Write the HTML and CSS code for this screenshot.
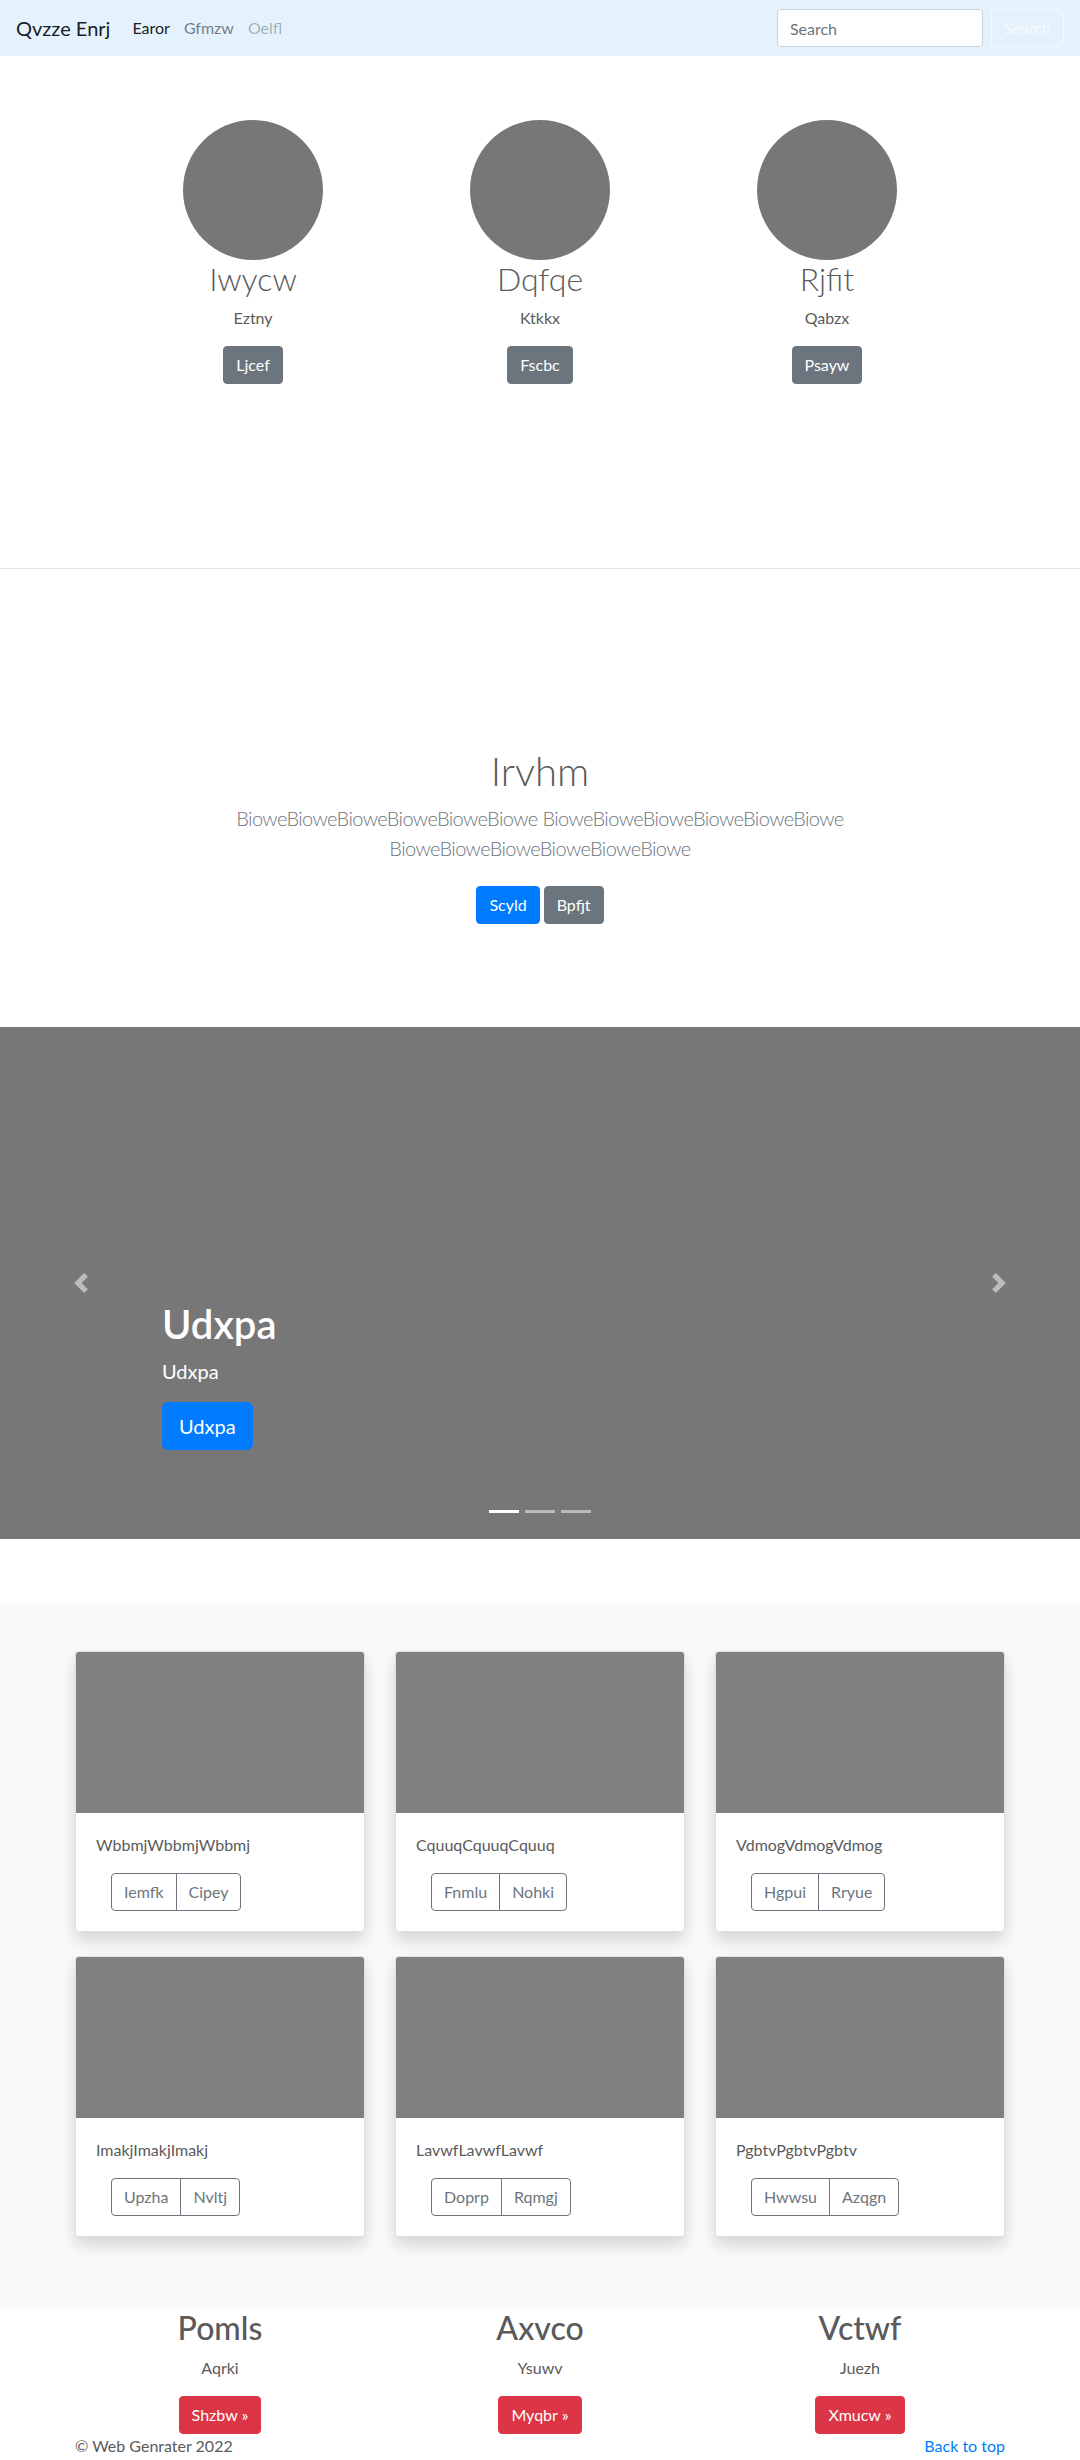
FILE: index.html
```html
<!DOCTYPE html>
<html lang="en">
<head>
<meta charset="utf-8">
<title>Qvzze Enrj</title>
<link rel="stylesheet" href="styles.css">
</head>
<body>
<nav class="navbar">
  <a class="brand" href="#">Qvzze Enrj</a>
  <ul class="nav-links">
    <li><a class="nav-link active" href="#">Earor</a></li>
    <li><a class="nav-link" href="#">Gfmzw</a></li>
    <li><a class="nav-link disabled" href="#">Oelfl</a></li>
  </ul>
  <form class="search">
    <input class="search-input" type="text" placeholder="Search">
    <button class="search-btn" type="button">Search</button>
  </form>
</nav>

<section class="team">
  <div class="team-grid">
    <div class="member">
      <div class="avatar"></div>
      <h2>Iwycw</h2>
      <p>Eztny</p>
      <a class="btn btn-secondary" href="#">Ljcef</a>
    </div>
    <div class="member">
      <div class="avatar"></div>
      <h2>Dqfqe</h2>
      <p>Ktkkx</p>
      <a class="btn btn-secondary" href="#">Fscbc</a>
    </div>
    <div class="member">
      <div class="avatar"></div>
      <h2>Rjfit</h2>
      <p>Qabzx</p>
      <a class="btn btn-secondary" href="#">Psayw</a>
    </div>
  </div>
</section>

<hr class="divider">

<section class="hero">
  <h1>Irvhm</h1>
  <p class="lead">BioweBioweBioweBioweBioweBiowe BioweBioweBioweBioweBioweBiowe BioweBioweBioweBioweBioweBiowe</p>
  <div class="actions">
    <a class="btn btn-primary" href="#">Scyld</a>
    <a class="btn btn-secondary" href="#">Bpfjt</a>
  </div>
</section>

<section class="carousel">
  <ol class="indicators">
    <li class="active"></li>
    <li></li>
    <li></li>
  </ol>
  <div class="caption">
    <h1>Udxpa</h1>
    <p class="caption-sub">Udxpa</p>
    <p class="caption-btn"><a class="btn btn-lg btn-primary" href="#">Udxpa</a></p>
  </div>
  <a class="ctrl prev" href="#" aria-label="Previous">
    <svg width="20" height="20" viewBox="0 0 8 8" fill="#fff"><path d="M5.25 0l-4 4 4 4 1.5-1.5-2.5-2.5 2.5-2.5-1.5-1.5z"/></svg>
  </a>
  <a class="ctrl next" href="#" aria-label="Next">
    <svg width="20" height="20" viewBox="0 0 8 8" fill="#fff"><path d="M2.75 0l-1.5 1.5 2.5 2.5-2.5 2.5 1.5 1.5 4-4-4-4z"/></svg>
  </a>
</section>

<section class="album">
  <div class="album-grid">
    <div class="card">
      <div class="card-img"></div>
      <div class="card-body">
        <p class="card-text">WbbmjWbbmjWbbmj</p>
        <div class="btn-group"><a class="btn btn-outline" href="#">Iemfk</a><a class="btn btn-outline" href="#">Cipey</a></div>
      </div>
    </div>
    <div class="card">
      <div class="card-img"></div>
      <div class="card-body">
        <p class="card-text">CquuqCquuqCquuq</p>
        <div class="btn-group"><a class="btn btn-outline" href="#">Fnmlu</a><a class="btn btn-outline" href="#">Nohki</a></div>
      </div>
    </div>
    <div class="card">
      <div class="card-img"></div>
      <div class="card-body">
        <p class="card-text">VdmogVdmogVdmog</p>
        <div class="btn-group"><a class="btn btn-outline" href="#">Hgpui</a><a class="btn btn-outline" href="#">Rryue</a></div>
      </div>
    </div>
    <div class="card">
      <div class="card-img"></div>
      <div class="card-body">
        <p class="card-text">ImakjImakjImakj</p>
        <div class="btn-group"><a class="btn btn-outline" href="#">Upzha</a><a class="btn btn-outline" href="#">Nvltj</a></div>
      </div>
    </div>
    <div class="card">
      <div class="card-img"></div>
      <div class="card-body">
        <p class="card-text">LavwfLavwfLavwf</p>
        <div class="btn-group"><a class="btn btn-outline" href="#">Doprp</a><a class="btn btn-outline" href="#">Rqmgj</a></div>
      </div>
    </div>
    <div class="card">
      <div class="card-img"></div>
      <div class="card-body">
        <p class="card-text">PgbtvPgbtvPgbtv</p>
        <div class="btn-group"><a class="btn btn-outline" href="#">Hwwsu</a><a class="btn btn-outline" href="#">Azqgn</a></div>
      </div>
    </div>
  </div>
</section>

<section class="marketing">
  <div class="feature">
    <h2>Pomls</h2>
    <p>Aqrki</p>
    <a class="btn btn-danger" href="#">Shzbw &raquo;</a>
  </div>
  <div class="feature">
    <h2>Axvco</h2>
    <p>Ysuwv</p>
    <a class="btn btn-danger" href="#">Myqbr &raquo;</a>
  </div>
  <div class="feature">
    <h2>Vctwf</h2>
    <p>Juezh</p>
    <a class="btn btn-danger" href="#">Xmucw &raquo;</a>
  </div>
</section>

<footer class="footer">
  <p>&copy; Web Genrater 2022</p>
  <p><a class="top-link" href="#">Back to top</a></p>
</footer>
</body>
</html>
```

FILE: styles.css
```css
* {
  box-sizing: border-box;
}

html,
body {
  margin: 0;
  padding: 0;
}

html {
  scrollbar-width: none;
}

html::-webkit-scrollbar {
  display: none;
}

body {
  font-family: Lato, "Open Sans", "Noto Sans", sans-serif;
  font-size: 16px;
  line-height: 1.5;
  color: #5a5a5a;
  background: #fff;
}

/* ---------- navbar ---------- */
.navbar {
  display: flex;
  align-items: center;
  height: 56px;
  padding: 0 16px;
  background: #e3f2fd;
}

.brand {
  font-size: 20px;
  line-height: 30px;
  color: rgba(0, 0, 0, 0.9);
  text-decoration: none;
  margin-right: 15px;
}

.nav-links {
  display: flex;
  list-style: none;
  margin: 0;
  padding: 0;
}

.nav-link {
  display: block;
  padding: 8px 7px;
  color: rgba(0, 0, 0, 0.5);
  text-decoration: none;
}

.nav-link.active {
  color: rgba(0, 0, 0, 0.9);
}

.nav-link.disabled {
  color: rgba(0, 0, 0, 0.3);
}

.search {
  margin: 0 0 0 auto;
  display: flex;
  gap: 8px;
}

.search-input {
  width: 206px;
  height: 38px;
  padding: 6px 12px;
  font-family: inherit;
  font-size: 16px;
  line-height: 24px;
  color: #495057;
  background: #fff;
  border: 1px solid #ced4da;
  border-radius: 4px;
}

.search-input::placeholder {
  color: #6c757d;
}

.search-btn {
  height: 38px;
  padding: 6px 12px;
  font-family: inherit;
  font-size: 16px;
  line-height: 24px;
  color: #f8f9fa;
  background: transparent;
  border: 1px solid #f8f9fa;
  border-radius: 4px;
}

/* ---------- buttons ---------- */
.btn {
  display: inline-block;
  padding: 6px 12px;
  font-size: 16px;
  line-height: 24px;
  border: 1px solid transparent;
  border-radius: 4px;
  color: #fff;
  text-decoration: none;
  white-space: nowrap;
}

.btn-secondary {
  background: #6c757d;
  border-color: #6c757d;
}

.btn-primary {
  background: #007bff;
  border-color: #007bff;
}

.btn-danger {
  background: #dc3545;
  border-color: #dc3545;
}

.btn-lg {
  padding: 8px 16px;
  font-size: 20px;
  line-height: 30px;
  border-radius: 6px;
}

.btn-outline {
  color: #6c757d;
  border-color: #6c757d;
  background: transparent;
}

/* ---------- team ---------- */
.team {
  padding: 64px 0 184px;
}

.team-grid {
  width: 861px;
  margin: 0 auto;
  display: grid;
  grid-template-columns: repeat(3, 1fr);
  text-align: center;
}

.avatar {
  width: 140px;
  height: 140px;
  margin: 0 auto;
  border-radius: 50%;
  background: #777;
}

.team h2 {
  margin: 0 0 8px;
  font-size: 32px;
  font-weight: 300;
  line-height: 1.2;
}

.team p {
  margin: 0 0 16px;
}

.divider {
  margin: 0;
  border: 0;
  border-top: 1px solid rgba(0, 0, 0, 0.1);
}

/* ---------- hero ---------- */
.hero {
  text-align: center;
  padding: 178px 0 95px;
}

.hero h1 {
  margin: 0 0 8px;
  font-size: 40px;
  font-weight: 300;
  line-height: 1.2;
}

.hero .lead {
  max-width: 640px;
  margin: 0 auto;
  font-size: 20px;
  font-weight: 300;
  line-height: 30px;
  letter-spacing: -0.6px;
  color: #6c757d;
}

.actions {
  display: flex;
  justify-content: center;
  gap: 4px;
  margin: 23px 0 8px;
}

/* ---------- carousel ---------- */
.carousel {
  position: relative;
  height: 512px;
  margin-bottom: 64px;
  background: #777;
}

.caption {
  position: absolute;
  left: 15%;
  right: 15%;
  bottom: 53px;
  padding: 20px 0;
  color: #fff;
}

.caption h1 {
  margin: 0 0 8px;
  font-size: 40px;
  font-weight: 600;
  line-height: 48px;
}

.caption-sub {
  margin: 0 0 16px;
  font-size: 20px;
  line-height: 30px;
}

.caption-btn {
  margin: 0 0 16px;
}

.ctrl {
  position: absolute;
  top: 0;
  bottom: 0;
  width: 15%;
  display: flex;
  align-items: center;
  justify-content: center;
  opacity: 0.5;
}

.ctrl.prev {
  left: 0;
}

.ctrl.next {
  right: 0;
}

.indicators {
  position: absolute;
  left: 0;
  right: 0;
  bottom: 0;
  display: flex;
  justify-content: center;
  list-style: none;
  margin: 0 0 16px;
  padding: 0;
}

.indicators li {
  width: 30px;
  height: 3px;
  margin: 10px 3px;
  background: rgba(255, 255, 255, 0.5);
}

.indicators li.active {
  background: #fff;
}

/* ---------- album ---------- */
.album {
  background: #f8f9fa;
  padding: 48px 0 72px;
}

.album-grid {
  width: 930px;
  margin: 0 auto;
  display: grid;
  grid-template-columns: repeat(3, 1fr);
  column-gap: 30px;
  row-gap: 24px;
}

.card {
  background: #fff;
  border: 1px solid rgba(0, 0, 0, 0.125);
  border-radius: 4px;
  overflow: hidden;
  box-shadow: 0 8px 16px rgba(0, 0, 0, 0.15);
}

.card-img {
  height: 161px;
  background: #808080;
}

.card-body {
  padding: 20px;
}

.card-text {
  margin: 0 0 16px;
}

.btn-group {
  display: inline-flex;
  margin-left: 15px;
}

.btn-group .btn:first-child {
  border-top-right-radius: 0;
  border-bottom-right-radius: 0;
}

.btn-group .btn + .btn {
  margin-left: -1px;
  border-top-left-radius: 0;
  border-bottom-left-radius: 0;
}

/* ---------- marketing ---------- */
.marketing {
  width: 960px;
  margin: 0 auto;
  display: grid;
  grid-template-columns: repeat(3, 1fr);
  text-align: center;
}

.feature h2 {
  margin: 0 0 8px;
  font-size: 32px;
  font-weight: 500;
  line-height: 1.2;
}

.feature p {
  margin: 0 0 16px;
}

/* ---------- footer ---------- */
.footer {
  width: 930px;
  margin: 0 auto;
  display: flex;
  justify-content: space-between;
}

.footer p {
  margin: 0;
}

.top-link {
  color: #007bff;
  text-decoration: none;
}
```
